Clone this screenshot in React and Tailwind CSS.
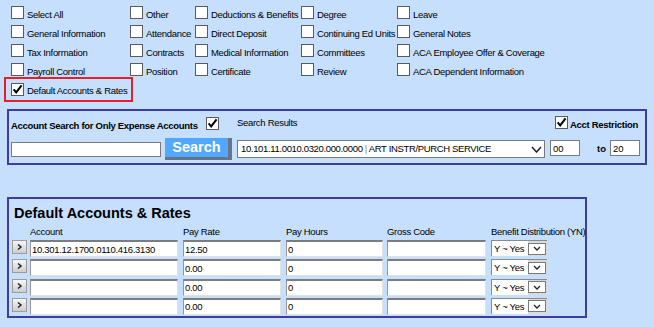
import React from "react";

const Check = ({ checked }) => (
  <span className="w-[13px] h-[13px] shrink-0 bg-white border border-[#5a5a5a] flex items-center justify-center">
    {checked && (
      <svg width="11" height="11" viewBox="0 0 11 11">
        <path d="M1.6 5.4 L4.2 8.4 L9.6 1.4" fill="none" stroke="#000" strokeWidth="2" />
      </svg>
    )}
  </span>
);

const rows = [
  ["Select All", "Other", "Deductions & Benefits", "Degree", "Leave"],
  ["General Information", "Attendance", "Direct Deposit", "Continuing Ed Units", "General Notes"],
  ["Tax Information", "Contracts", "Medical Information", "Committees", "ACA Employee Offer & Coverage"],
  ["Payroll Control", "Position", "Certificate", "Review", "ACA Dependent Information"],
];

const Chevron = ({ w = 10, h = 6, sw = 1.6 }) => (
  <svg width={w} height={h} viewBox={`0 0 ${w} ${h}`} className="block">
    <path d={`M1 1 L${w / 2} ${h - 1} L${w - 1} 1`} fill="none" stroke="#222" strokeWidth={sw} />
  </svg>
);

const TInput = ({ value, cls }) => (
  <input
    readOnly
    value={value}
    className={`${cls} block shrink-0 h-[17px] bg-white border-t-2 border-l border-b border-r border-t-[#7c7c7c] border-l-[#979797] border-b-[#e2e2e2] border-r-[#e2e2e2] text-[9.5px] tracking-[-0.3px] px-[1px] outline-none text-black`}
  />
);

const tableRows = [
  ["10.301.12.1700.0110.416.3130", "12.50", "0"],
  ["", "0.00", "0"],
  ["", "0.00", "0"],
  ["", "0.00", "0"],
];

export default function App() {
  return (
    <div className="w-[654px] h-[327px] bg-[#c5dffd] overflow-hidden font-['Liberation_Sans',Arial,sans-serif] text-black leading-none">
      {/* checkbox grid */}
      <div className="pt-[6px] pl-[11px] grid grid-cols-[119px_65px_106px_96px_1fr] auto-rows-[13px] gap-y-[6px]">
        {rows.flat().map((t, i) => (
          <div key={i} className="flex items-start gap-[3px]">
            <Check />
            <span className="mt-[2px] leading-[13px] text-[9.5px] tracking-[-0.3px] whitespace-nowrap">{t}</span>
          </div>
        ))}
      </div>

      {/* highlighted default accounts */}
      <div className="mt-[1px] ml-[4px] w-[129px] h-[25px] border-2 border-[#e3212b] pl-[5px] pt-[4px] flex items-start gap-[3px]">
        <Check checked />
        <span className="mt-[1px] leading-[13px] text-[9.5px] tracking-[-0.3px] whitespace-nowrap">Default Accounts &amp; Rates</span>
      </div>

      {/* search panel */}
      <div className="mt-[7px] ml-[7px] w-[640px] border-2 border-[#3d3d9c] pl-[2px] pt-[6px] pb-[3px]">
        <div className="flex items-start h-[13px]">
          <div className="w-[226px] flex items-start">
            <span className="w-[195px] mt-[2.5px] leading-[12px] text-[9.5px] font-bold tracking-[-0.3px] whitespace-nowrap">
              Account Search for Only Expense Accounts
            </span>
            <Check checked />
          </div>
          <span className="w-[318px] leading-[12px] text-[9.5px] tracking-[-0.3px]">Search Results</span>
          <div className="flex items-start gap-[2px] -mt-[1px]">
            <Check checked />
            <span className="mt-[3px] leading-[12px] text-[9.5px] font-bold tracking-[-0.3px] whitespace-nowrap">Acct Restriction</span>
          </div>
        </div>
        <div className="mt-[8px] h-[22px] flex items-start">
          <input readOnly value="" className="block mt-[4px] w-[150px] h-[15px] bg-white border border-[#7a7a7a] outline-none" />
          <button className="ml-[4px] w-[67px] h-[22px] bg-[#52a8ff] border-r-4 border-b-[3px] border-r-[#66768a] border-b-[#66768a] text-white font-bold text-[14.5px] leading-none flex items-center justify-center pb-[1px]">
            Search
          </button>
          <div className="ml-[5px] mt-[2px] w-[308px] h-[18px] bg-white border border-[#7a7a7a] flex items-center pl-[3px] pr-[2px]">
            <span className="flex-1 text-[9.5px] tracking-[-0.35px] whitespace-nowrap overflow-hidden">
              10.101.11.0010.0320.000.0000 <span className="text-[#888]">|</span> ART INSTR/PURCH SERVICE
            </span>
            <Chevron w={11} h={7} sw={1.5} />
          </div>
          <input readOnly value="00" className="block ml-[5px] mt-[2px] w-[30px] h-[16px] bg-white border border-[#7a7a7a] outline-none text-[9.5px] px-[2px]" />
          <span className="ml-[17px] mt-[5px] leading-[12px] text-[9.5px] font-bold">to</span>
          <input readOnly value="20" className="block ml-[4px] mt-[2px] w-[30px] h-[16px] bg-white border border-[#7a7a7a] outline-none text-[9.5px] px-[2px]" />
        </div>
      </div>

      {/* default accounts & rates panel */}
      <div className="mt-[32px] ml-[7px] w-[580px] h-[121px] border-2 border-[#3d3d9c] pl-[3px] pt-[5px]">
        <div className="pl-[2px] text-[14.5px] leading-[18px] font-bold">Default Accounts &amp; Rates</div>
        <div className="mt-[4px] flex text-[9.5px] leading-[12px] tracking-[-0.3px] whitespace-nowrap">
          <span className="w-[15px]" />
          <span className="ml-[3px] w-[148px]">Account</span>
          <span className="ml-[5px] w-[98px]">Pay Rate</span>
          <span className="ml-[5px] w-[97px]">Pay Hours</span>
          <span className="ml-[4px] w-[99px]">Gross Code</span>
          <span className="ml-[5px] w-[55px]">Benefit Distribution (YN)</span>
        </div>
        <div className="mt-[2px] flex flex-col gap-y-[2.3px]">
          {tableRows.map((r, i) => (
            <div key={i} className="flex items-start h-[17px]">
              <button className="w-[15px] h-[14px] border border-[#9c9c9c] bg-gradient-to-b from-[#f6f6f6] to-[#cdcdcd] flex items-center justify-center">
                <svg width="7" height="8" viewBox="0 0 7 8" className="block">
                  <path d="M2 1.5 L5 4 L2 6.5" fill="none" stroke="#222" strokeWidth="1.5" />
                </svg>
              </button>
              <TInput value={r[0]} cls="ml-[3px] w-[148px]" />
              <TInput value={r[1]} cls="ml-[5px] w-[98px]" />
              <TInput value={r[2]} cls="ml-[5px] w-[97px]" />
              <TInput value="" cls="ml-[4px] w-[99px]" />
              <div className="ml-[5px] w-[56px] h-[16px] bg-[#dadada] border-t border-l border-[#8a8a8a] flex items-center pr-[1px]">
                <span className="h-full flex-1 bg-white text-[9.5px] tracking-[-0.3px] pl-[2px] leading-[15px] whitespace-nowrap">Y ~ Yes</span>
                <span className="w-[18px] h-[12px] bg-white border border-[#7a7a7a] flex items-center justify-center">
                  <Chevron w={8} h={5} sw={1.3} />
                </span>
              </div>
            </div>
          ))}
        </div>
      </div>
    </div>
  );
}
